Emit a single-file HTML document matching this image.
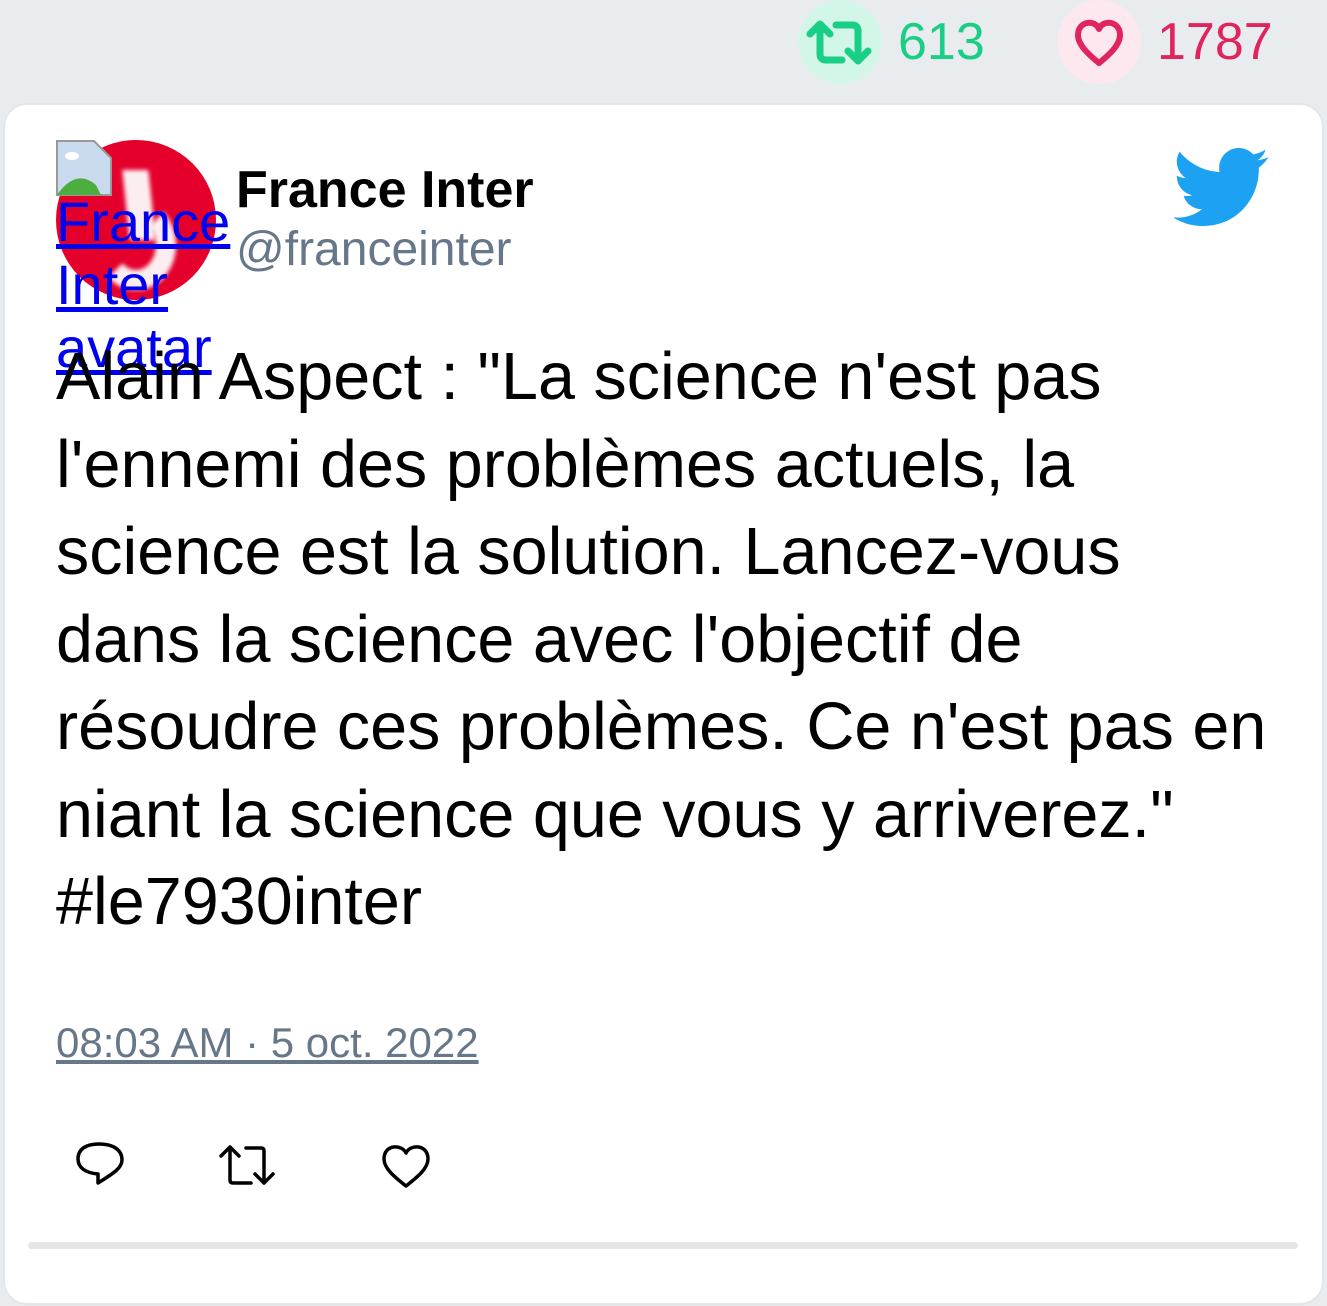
<!DOCTYPE html>
<html><head><meta charset="utf-8"><style>
*{margin:0;padding:0;box-sizing:border-box}
body{width:1327px;height:1306px;background:#e9ecef;font-family:"Liberation Sans",sans-serif;position:relative;overflow:hidden}
.abs{position:absolute}
.card{position:absolute;left:3px;top:103px;width:1321px;height:1202px;background:#fff;border:2px solid #e4e6e8;border-radius:24px}
.body{position:absolute;left:56px;top:334px;width:1260px;font-size:66.5px;line-height:87.5px;color:#000;white-space:nowrap}
</style></head><body>
<div class="abs" style="left:798px;top:0;width:84px;height:84px;border-radius:50%;background:#d2f6e8"></div>
<svg class="abs" style="left:806px;top:20px" width="68" height="46" viewBox="0 0 68 46"><g fill="none" stroke="#19cf86" stroke-width="7" stroke-linecap="round" stroke-linejoin="round"><path d="M4 14 L14 4 L24 14 M14 5 V34 Q14 40 20 40 H36"/><path d="M30 5 H46 Q52 5 52 11 V40 M42 31 L52 41 L62 31"/></g></svg>
<div class="abs" style="left:898px;top:12px;font-size:52px;color:#19cf86">613</div>
<div class="abs" style="left:1057px;top:0;width:84px;height:84px;border-radius:50%;background:#fde8ef"></div>
<svg class="abs" style="left:1073px;top:16px" width="52" height="52" viewBox="0 0 52 52"><path d="M26 13 C22 3 5 5 5 19 C5 29 16 39 26 47 C36 39 47 29 47 19 C47 5 30 3 26 13Z" fill="none" stroke="#e0245e" stroke-width="6" stroke-linejoin="round"/></svg>
<div class="abs" style="left:1157px;top:12px;font-size:52px;color:#e0245e">1787</div>

<div class="card"></div>
<div class="abs" style="left:56px;top:140px;width:160px;height:160px;border-radius:50%;background:#e4002b;overflow:hidden">
<div class="abs" style="left:70px;top:30px;width:26px;height:70px;background:#fbeef0;transform:skewX(6deg);filter:blur(2px)"></div>
<div class="abs" style="left:40px;top:60px;width:80px;height:90px;border-radius:50%;border:20px solid #fbeef0;border-left-color:transparent;border-top-color:transparent;filter:blur(2px)"></div>
</div>
<svg class="abs" style="left:56px;top:140px" width="56" height="56" viewBox="0 0 56 56"><path d="M1 1 H38 L55 18 V55 H1Z" fill="#c9d9ee" stroke="#999" stroke-width="2"/><path d="M1 55 Q20 28 40 45 L45 55Z" fill="#4cae3f"/><ellipse cx="16" cy="16" rx="7" ry="4" fill="#fff"/></svg>
<div class="abs" style="left:56px;top:190px;width:190px;font-size:56px;line-height:63px;color:#0000ee;text-decoration:underline">France Inter avatar</div>
<div class="abs" style="left:236px;top:160px;font-size:52px;font-weight:bold;color:#000">France Inter</div>
<div class="abs" style="left:236px;top:222px;font-size:48px;color:#66778a">@franceinter</div>
<svg class="abs" style="left:1174px;top:148px" width="96" height="80" viewBox="0 0 24 20"><path fill="#1da1f2" d="M23.6 2.3c-.9.4-1.8.6-2.8.8 1-.6 1.8-1.6 2.1-2.7-.9.6-2 1-3.1 1.2C18.9.6 17.6 0 16.2 0c-2.7 0-4.9 2.2-4.9 4.9 0 .4 0 .8.1 1.1C7.4 5.8 3.8 3.9 1.4.9c-.4.7-.7 1.6-.7 2.5 0 1.7.9 3.2 2.2 4.1-.8 0-1.6-.2-2.2-.6v.1c0 2.4 1.7 4.4 3.9 4.8-.4.1-.8.2-1.3.2-.3 0-.6 0-.9-.1.6 2 2.4 3.4 4.6 3.4-1.7 1.3-3.8 2.1-6.1 2.1-.4 0-.8 0-1.2-.1 2.2 1.4 4.8 2.2 7.5 2.2 9.1 0 14-7.5 14-14v-.6c1-.7 1.8-1.6 2.4-2.6z"/></svg>
<div class="body">Alain Aspect : "La science n'est pas<br>l'ennemi des problèmes actuels, la<br>science est la solution. Lancez-vous<br>dans la science avec l'objectif de<br>résoudre ces problèmes. Ce n'est pas en<br>niant la science que vous y arriverez."<br>#le7930inter</div>
<div class="abs" style="left:56px;top:1019px;font-size:42px;color:#66778a;text-decoration:underline">08:03 AM · 5 oct. 2022</div>
<svg class="abs" style="left:74px;top:1140px" width="54" height="52" viewBox="0 0 54 52"><path d="M25 4 C38 4 48 9 48 20 C48 28 40 33 24 43 V34 C12 33 4 28 4 19 C4 9 12 4 25 4Z" fill="none" stroke="#000" stroke-width="3.5" stroke-linejoin="round"/></svg>
<svg class="abs" style="left:218px;top:1144px" width="66" height="46" viewBox="0 0 66 46"><g fill="none" stroke="#000" stroke-width="3.5" stroke-linecap="round" stroke-linejoin="round"><path d="M3 12 L12 3 L21 12 M12 4 V36 Q12 39 15 39 H33"/><path d="M28 4 H43 Q46 4 46 7 V39 M37 30 L46 39 L55 30"/></g></svg>
<svg class="abs" style="left:380px;top:1142px" width="52" height="48" viewBox="0 0 52 48"><path d="M26 11 C22 2 4 2 4 17 C4 27 16 36 26 44 C36 36 48 27 48 17 C48 2 30 2 26 11Z" fill="none" stroke="#000" stroke-width="3.5" stroke-linejoin="round"/></svg>
<div class="abs" style="left:28px;top:1242px;width:1270px;height:7px;border-radius:4px;background:#e6e6e6"></div>
</body></html>
